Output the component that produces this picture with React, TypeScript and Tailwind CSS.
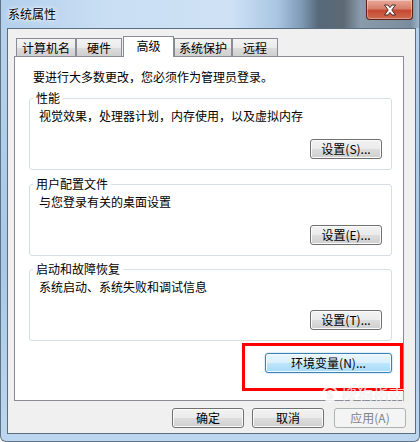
import React from 'react'

type ButtonKind = 'normal' | 'focus' | 'disabled'

interface WinButtonProps {
  label: string
  kind?: ButtonKind
  className?: string
}

const buttonKinds: Record<ButtonKind, string> = {
  normal:
    'border-[#707070] text-black bg-[linear-gradient(180deg,#f2f2f2_0%,#ebebeb_50%,#dddddd_51%,#cfcfcf_100%)] shadow-[inset_0_0_0_1px_#fbfbfb]',
  focus:
    'border-[#3c7fb1] text-black bg-[linear-gradient(180deg,#eaf6fd_0%,#d9f0fc_50%,#bee6fd_51%,#a7d9f5_100%)] shadow-[inset_0_0_0_1px_#f4fbff,0_0_2px_#7dc4ef]',
  disabled: 'border-[#adb2b5] text-[#838383] bg-[#f4f4f4]'
}

const WinButton = ({ label, kind = 'normal', className = '' }: WinButtonProps): JSX.Element => {
  return (
    <div
      className={`h-[20px] rounded-[3px] border flex items-center justify-center text-[12px] leading-[16px] ${buttonKinds[kind]} ${className}`}
    >
      {label}
    </div>
  )
}

interface GroupProps {
  title: string
  text: string
  button: string
  className?: string
}

const Group = ({ title, text, button, className = '' }: GroupProps): JSX.Element => {
  return (
    <fieldset
      className={`ml-[14px] w-[363px] rounded-[3px] border border-[#d5dfe5] pl-[9px] pr-[9px] pb-[10px] ${className}`}
    >
      <legend className="-ml-[6px] px-[3px] text-[12px] leading-[16px] text-black">{title}</legend>
      <div className="pt-[2px] text-[12px] leading-[16px] text-black">{text}</div>
      <div className="mt-[15px] flex justify-end">
        <WinButton label={button} className="w-[72px]" />
      </div>
    </fieldset>
  )
}

const tabs = [
  { label: '计算机名', w: 'w-[60px] ml-[2px]' },
  { label: '硬件', w: 'w-[46px]' },
  { label: '高级', w: 'w-[51px] ml-[1px]', active: true },
  { label: '系统保护', w: 'w-[58px]' },
  { label: '远程', w: 'w-[46px]' }
]

const App = (): JSX.Element => {
  return (
    <div className="w-[420px] h-[442px] overflow-hidden rounded-b-[6px] border-x border-b border-[#5f7286] bg-[linear-gradient(180deg,#b7d2ed_0%,#a9c8e7_60%,#bcd6ef_100%)] font-['Noto_Sans_CJK_SC','Microsoft_YaHei',sans-serif] text-black">
      <div className="h-[28px] flex items-start justify-between bg-[linear-gradient(90deg,#b2cfec_0%,#c9def3_25%,#cfe2f5_55%,#a9c6e3_66%,#7d99b4_72%,#56687a_76%,#5d6a74_82%,#8a9bab_86%,#7a8d9e_98%,#9db5cc_100%)]">
        <div className="h-[28px] pl-[7px] flex items-center text-[12px] text-black [text-shadow:0_0_6px_#ffffff,0_0_3px_#ffffff]">
          系统属性
        </div>
        <div className="mr-[6px] w-[47px] h-[20px] rounded-b-[4px] border border-t-0 border-[#5e2117] bg-[linear-gradient(180deg,#e9a99a_0%,#d7806c_45%,#c44a32_55%,#cf6a4f_100%)] shadow-[inset_0_0_0_1px_rgba(255,255,255,0.35)] flex items-center justify-center">
          <svg width="14" height="12" viewBox="0 0 14 12">
            <path
              d="M1.5 1 L5 1 L7 3.6 L9 1 L12.5 1 L8.8 6 L12.5 11 L9 11 L7 8.4 L5 11 L1.5 11 L5.2 6 Z"
              fill="#ffffff"
              stroke="#4a2a25"
              strokeWidth="1"
              strokeLinejoin="round"
            />
          </svg>
        </div>
      </div>

      <div className="relative ml-[6px] w-[409px] h-[406px] border border-[#5a6c80] bg-[#f0f0f0] pl-[6px]">
        <div className="pt-[7px] h-[27px] flex items-end">
          {tabs.map((t) =>
            t.active ? (
              <div
                key={t.label}
                className={`${t.w} relative z-10 h-[21px] -mb-px border border-b-0 border-[#898c95] bg-white flex items-start justify-center pt-[1px] text-[12px] leading-[16px]`}
              >
                {t.label}
              </div>
            ) : (
              <div
                key={t.label}
                className={`${t.w} h-[18px] border border-b-0 border-[#898c95] bg-[linear-gradient(180deg,#f3f3f3_0%,#ebebeb_50%,#dddddd_51%,#cfcfcf_100%)] flex items-center justify-center text-[12px] leading-[16px]`}
              >
                {t.label}
              </div>
            )
          )}
        </div>

        <div className="w-[390px] h-[345px] border border-[#898c95] bg-white flex flex-col">
          <div className="pt-[12px] pl-[18px] text-[12px] leading-[16px]">
            要进行大多数更改，您必须作为管理员登录。
          </div>
          <Group
            className="mt-[5px]"
            title="性能"
            text="视觉效果，处理器计划，内存使用，以及虚拟内存"
            button="设置(S)..."
          />
          <Group className="mt-[6px]" title="用户配置文件" text="与您登录有关的桌面设置" button="设置(E)..." />
          <Group
            className="mt-[5px]"
            title="启动和故障恢复"
            text="系统启动、系统失败和调试信息"
            button="设置(T)..."
          />
          <div className="mt-[2px] self-end w-[161px] h-[48px] border-[3px] border-[#ff0000] pl-[20px] pt-[7px]">
            <WinButton label="环境变量(N)..." kind="focus" className="w-[127px]" />
          </div>
        </div>

        <div className="mt-[7px] pr-[9px] flex justify-end">
          <WinButton label="确定" className="w-[72px]" />
          <WinButton label="取消" className="w-[72px] ml-[8px]" />
          <WinButton label="应用(A)" kind="disabled" className="w-[72px] ml-[10px]" />
        </div>

        <div className="absolute left-[314px] top-[356px] flex items-center gap-[3px] text-[16px] leading-[18px] text-white/80 [text-shadow:0_0_1px_rgba(0,0,0,0.18)] pointer-events-none">
          <span className="w-[16px] h-[16px] rounded-full border-2 border-white/80 text-[11px] leading-[12px] flex items-center justify-center font-bold">
            S
          </span>
          搜狗指南
        </div>
      </div>
    </div>
  )
}

export default App
